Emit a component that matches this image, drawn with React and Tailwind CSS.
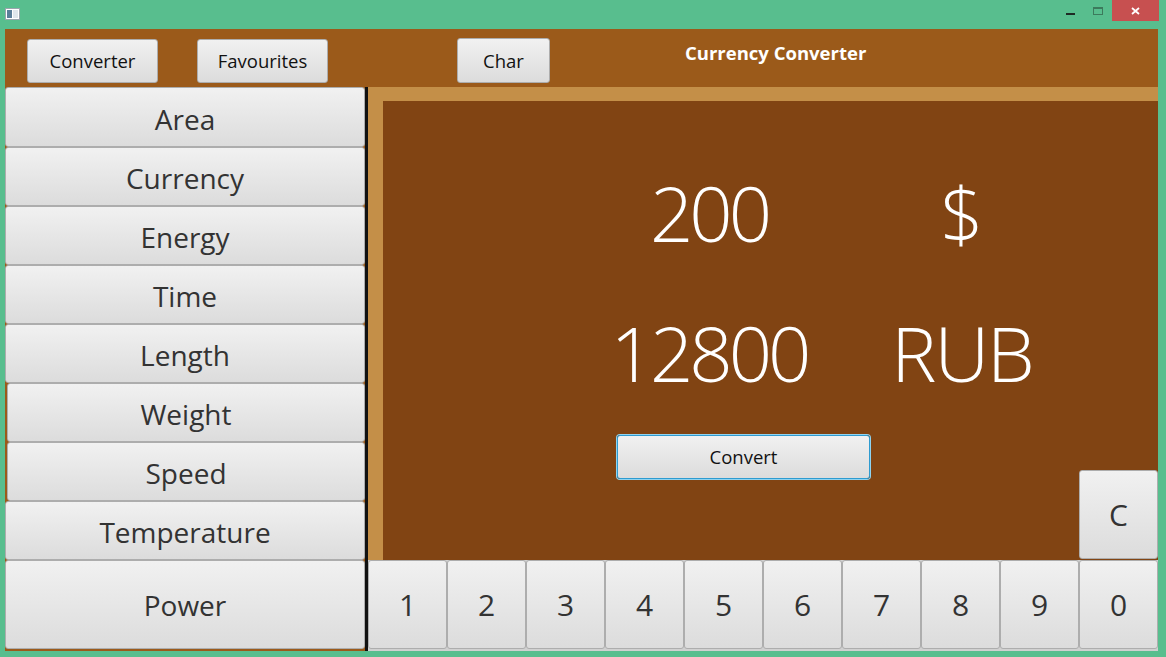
import React from "react";

const base =
  "bg-gradient-to-b from-[#F1F1F1] to-[#DCDCDC] border border-[#ADADAD] rounded-[3px] flex items-center justify-center";
const btn = `${base} text-[#333333]`;
const btnDark = `${base} text-[#111111]`;

const leftItems = [
  ["Area", "h-[60px] pt-[3px]", ""],
  ["Currency", "h-[59px] pt-[3px]", ""],
  ["Energy", "h-[59px] pt-[3px]", ""],
  ["Time", "h-[59px] pt-[3px]", ""],
  ["Length", "h-[59px] pt-[3px]", ""],
  ["Weight", "h-[59px] pt-[3px]", "ml-[2px]"],
  ["Speed", "h-[59px] pt-[3px]", "ml-[2px]"],
  ["Temperature", "h-[59px] pt-[3px]", ""],
  ["Power", "h-[89px]", ""],
];

export default function App() {
  return (
    <div
      className="w-[1166px] h-[657px] bg-[#58BE8E] flex flex-col overflow-hidden"
      style={{ fontFamily: '"Open Sans", "Noto Sans", sans-serif' }}
    >
      {/* title bar */}
      <div className="h-[29px] flex items-start relative">
        <svg className="ml-[5px] mt-[8px]" width="15" height="12" viewBox="0 0 15 12">
          <rect x="0.5" y="0.5" width="14" height="11" fill="#ffffff" stroke="#9aa5ad" />
          <rect x="2" y="2" width="5" height="8" fill="#5a7f99" />
          <rect x="8" y="2" width="5" height="8" fill="#dfe7ec" />
        </svg>
        <div className="ml-auto flex items-start">
          <div className="w-[9px] h-[2px] bg-[#1e2a24] mt-[13px] mr-[18px]" />
          <div className="w-[10px] h-[8px] border border-[#3c7a5c] border-t-2 mt-[7px] mr-[9px]" />
          <div className="w-[47px] h-[21px] bg-[#C75050] flex items-center justify-center mr-[7px]">
            <svg width="9" height="8" viewBox="0 0 9 8">
              <path d="M1 1 L8 7 M8 1 L1 7" stroke="#ffffff" strokeWidth="1.8" />
            </svg>
          </div>
        </div>
      </div>

      {/* content */}
      <div className="flex-1 ml-[5px] mr-[8px] mb-[6px] flex flex-col bg-[#9B5A1A]">
        {/* top bar */}
        <div className="h-[58px] flex items-start shrink-0">
          <div className={`${btnDark} ml-[22px] mt-[10px] w-[131px] h-[44px] text-[18.5px]`}>
            Converter
          </div>
          <div className={`${btnDark} ml-[39px] mt-[10px] w-[131px] h-[44px] text-[18.5px]`}>
            Favourites
          </div>
          <div className={`${btnDark} ml-[129px] mt-[9px] w-[93px] h-[45px] text-[18.5px]`}>
            Char
          </div>
          <div className="ml-[135px] mt-[12px] text-white font-bold text-[18.5px] leading-[24px]">
            Currency Converter
          </div>
        </div>

        <div className="flex flex-1 min-h-0">
          {/* left column */}
          <div className="w-[360px] flex flex-col shrink-0">
            {leftItems.map(([label, h, extra]) => (
              <div key={label} className={`${btn} ${h} ${extra} text-[28px]`}>
                {label}
              </div>
            ))}
          </div>
          <div className="w-[3px] bg-[#111111] shrink-0" />

          {/* right column */}
          <div className="flex-1 flex flex-col">
            <div className="h-[473px] bg-[#C48F48] pl-[15px] pt-[14px] flex shrink-0">
              <div className="flex-1 bg-[#814413] flex flex-col text-white font-light">
                <div className="flex mt-[74px] h-[76px] text-[76px] leading-[76px] tracking-[-4px]">
                  <div className="ml-[226px] w-[200px] text-center">200</div>
                  <div className="ml-[53px] w-[200px] text-center tracking-normal">$</div>
                </div>
                <div className="flex mt-[64px] h-[76px] text-[76px] leading-[76px] tracking-[-4px]">
                  <div className="ml-[226px] w-[200px] text-center">12800</div>
                  <div className="ml-[53px] w-[200px] text-center tracking-[-2px]">RUB</div>
                </div>
                <div className="flex items-start mt-[44px] font-normal">
                  <div
                    className={`${btnDark} ml-[234px] w-[253px] h-[44px] text-[18.5px] !border-[#2E9BD0] shadow-[0_0_0_1px_#8FD3F0]`}
                  >
                    Convert
                  </div>
                  <div className={`${btn} ml-auto mt-[35px] w-[79px] h-[89px] text-[30px]`}>C</div>
                </div>
              </div>
            </div>
            <div className="flex-1 grid grid-cols-10 bg-[#D0D0D0]">
              {["1", "2", "3", "4", "5", "6", "7", "8", "9", "0"].map((d) => (
                <div key={d} className={`${btn} h-[89px] text-[30px]`}>
                  {d}
                </div>
              ))}
            </div>
          </div>
        </div>
      </div>
    </div>
  );
}
